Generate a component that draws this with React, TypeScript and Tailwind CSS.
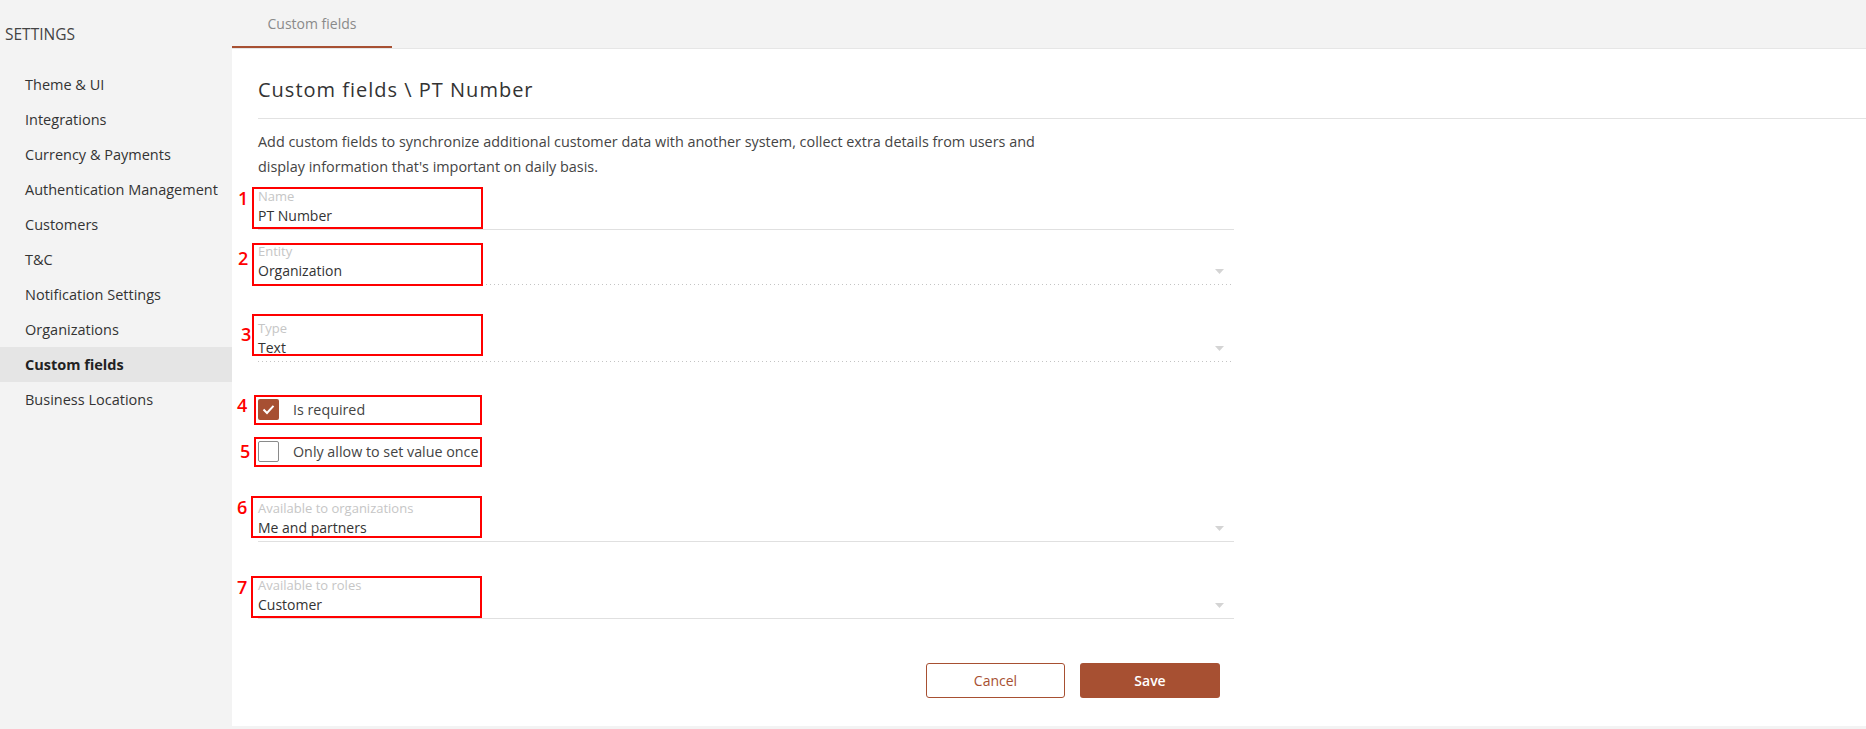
import React from "react";

function Arrow() {
  return (
    <svg width="9" height="5" viewBox="0 0 9 5" className="block">
      <path d="M0 0 H9 L4.5 5 Z" fill="#d4d4d4" />
    </svg>
  );
}

function Field({
  label,
  value,
  dotted,
  select,
  className,
}: {
  label: string;
  value: string;
  dotted?: boolean;
  select?: boolean;
  className?: string;
}) {
  return (
    <div className={className}>
      <div className="text-[13px] leading-[16px] text-[#c6c6c6]">{label}</div>
      <div className="mt-[2px] flex h-[20px] items-center justify-between pr-[10px]">
        <span className="text-[14px] leading-[20px] text-[#333]">{value}</span>
        {select && <Arrow />}
      </div>
      {dotted ? (
        <div className="mt-[3px] h-[1px] bg-[repeating-linear-gradient(to_right,#c4c4c4_0px,#c4c4c4_1px,transparent_1px,transparent_4px)]" />
      ) : (
        <div className="mt-[3px] h-[1px] bg-[#e0e0e0]" />
      )}
    </div>
  );
}

function Check({ checked, label, className }: { checked?: boolean; label: string; className?: string }) {
  return (
    <div className={"flex h-[21px] items-center gap-[14px] " + (className ?? "")}>
      {checked ? (
        <div className="flex h-[21px] w-[21px] items-center justify-center rounded-[2px] bg-[#a75032]">
          <svg width="13" height="11" viewBox="0 0 13 11">
            <path d="M1.5 5.5 L5 9 L11.5 1.8" fill="none" stroke="white" strokeWidth="2" />
          </svg>
        </div>
      ) : (
        <div className="h-[21px] w-[21px] rounded-[2px] border border-[#8a8a8a] bg-white" />
      )}
      <span className="text-[14.3px] leading-[20px] text-[#444]">{label}</span>
    </div>
  );
}

const items = [
  "Theme & UI",
  "Integrations",
  "Currency & Payments",
  "Authentication Management",
  "Customers",
  "T&C",
  "Notification Settings",
  "Organizations",
  "Custom fields",
  "Business Locations",
];

const boxes = [
  { n: "1", x: 252, y: 187, w: 231, h: 42, nx: 238, ny: 188 },
  { n: "2", x: 252, y: 243, w: 231, h: 43, nx: 238, ny: 248 },
  { n: "3", x: 252, y: 314, w: 231, h: 42, nx: 241, ny: 324 },
  { n: "4", x: 254, y: 395, w: 228, h: 30, nx: 237, ny: 395 },
  { n: "5", x: 254, y: 437, w: 228, h: 30, nx: 240, ny: 441 },
  { n: "6", x: 251, y: 496, w: 231, h: 42, nx: 237, ny: 497 },
  { n: "7", x: 251, y: 576, w: 231, h: 42, nx: 237, ny: 577 },
];

export default function App() {
  return (
    <div
      className="relative flex h-[729px] w-full overflow-hidden bg-[#f3f3f3]"
      style={{ fontFamily: '"Open Sans", "Noto Sans", sans-serif' }}
    >
      {/* Sidebar */}
      <aside className="w-[232px] shrink-0 pt-[24px]">
        <div className="pl-[5px] text-[15.5px] leading-[20px] text-[#444]">SETTINGS</div>
        <nav className="mt-[23px] flex flex-col">
          {items.map((it) => {
            const active = it === "Custom fields";
            return (
              <div
                key={it}
                className={
                  "flex h-[35px] items-center pl-[25px] text-[14.5px] " +
                  (active ? "bg-[#e5e5e5] font-bold text-[#222]" : "text-[#333]")
                }
              >
                {it}
              </div>
            );
          })}
        </nav>
      </aside>

      {/* Main */}
      <main className="flex min-w-0 flex-1 flex-col pb-[3px]">
        <div className="flex h-[48px] shrink-0 items-end">
          <div className="flex h-[48px] w-[160px] items-center justify-center border-b-2 border-[#a75032] text-[14px] text-[#8a8a8a]">
            Custom fields
          </div>
        </div>
        <section className="flex-1 border-t border-[#e6e6e6] bg-white">
          <div className="ml-[26px] border-b border-[#e2e2e2] pb-[14px] pt-[27px]">
            <h1 className="text-[20px] leading-[28px] tracking-[1px] text-[#333]">
              Custom fields \ PT Number
            </h1>
          </div>
          <div className="ml-[26px] w-[976px]">
            <p className="mt-[10px] text-[14.4px] leading-[25px] text-[#444]">
              Add custom fields to synchronize additional customer data with another system, collect extra details from users and
              <br />
              display information that's important on daily basis.
            </p>
            <Field className="mt-[9px]" label="Name" value="PT Number" />
            <Field className="mt-[13px]" label="Entity" value="Organization" dotted select />
            <Field className="mt-[35px]" label="Type" value="Text" dotted select />
            <Check className="mt-[37px]" checked label="Is required" />
            <Check className="mt-[21px]" label="Only allow to set value once" />
            <Field className="mt-[38px]" label="Available to organizations" value="Me and partners" select />
            <Field className="mt-[35px]" label="Available to roles" value="Customer" select />
            <div className="mt-[44px] flex justify-end gap-[15px] pr-[14px]">
              <button className="h-[35px] w-[139px] rounded-[3px] border border-[#a75032] bg-white text-[14px] text-[#a75032]">
                Cancel
              </button>
              <button className="h-[35px] w-[140px] rounded-[3px] bg-[#a75032] text-[14px] font-semibold text-white">
                Save
              </button>
            </div>
          </div>
        </section>
      </main>

      {/* Annotation overlays */}
      {boxes.map((b) => (
        <React.Fragment key={b.n}>
          <div
            className="pointer-events-none absolute border-2 border-[#ff0000]"
            style={{ left: b.x, top: b.y, width: b.w, height: b.h }}
          />
          <div
            className="pointer-events-none absolute text-[18px] font-semibold leading-[20px] text-[#ff0000]"
            style={{ left: b.nx, top: b.ny }}
          >
            {b.n}
          </div>
        </React.Fragment>
      ))}
    </div>
  );
}
